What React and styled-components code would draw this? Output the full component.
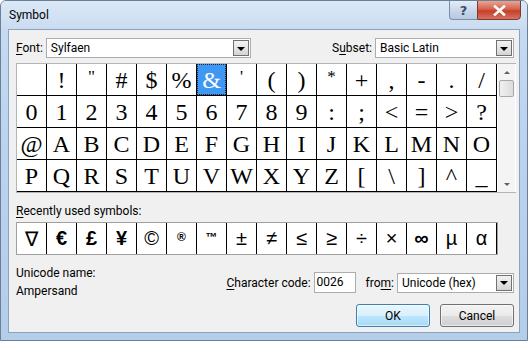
import styled, { createGlobalStyle } from "styled-components";

const GlobalStyle = createGlobalStyle`
  html, body { margin: 0; padding: 0; background: #fff; }
  body { font-family: Roboto, "Noto Sans", sans-serif; }
  * { box-sizing: border-box; }
`;

const ROWS = [
  [" ", "!", '"', "#", "$", "%", "&", "'", "(", ")", "*", "+", ",", "-", ".", "/"],
  ["0", "1", "2", "3", "4", "5", "6", "7", "8", "9", ":", ";", "<", "=", ">", "?"],
  ["@", "A", "B", "C", "D", "E", "F", "G", "H", "I", "J", "K", "L", "M", "N", "O"],
  ["P", "Q", "R", "S", "T", "U", "V", "W", "X", "Y", "Z", "[", "\\", "]", "^", "_"],
];

const RECENT = ["∇", "€", "£", "¥", "©", "®", "™", "±", "≠", "≤", "≥", "÷", "×", "∞", "µ", "α"];

// small chars that sit high in the cell, like in Sylfaen
const SMALL = { "*": true, "'": true, '"': true };
// recent symbols drawn heavier in the reference
const HEAVY = { "€": true, "£": true, "¥": true, "∞": true };

const SymbolDialog = () => {
  return (
    <>
      <GlobalStyle />
      <Window>
        <TitleBar>
          <Title>Symbol</Title>
          <Caption>
            <HelpBtn>?</HelpBtn>
            <CloseBtn>
              <svg width="13" height="11" viewBox="0 0 13 11">
                <path d="M2 1.5 L11 9.5 M11 1.5 L2 9.5" stroke="#fff" strokeWidth="2.6" strokeLinecap="square" />
              </svg>
            </CloseBtn>
          </Caption>
        </TitleBar>

        <Client>
          <TopRow>
            <Field>
              <Label><u>F</u>ont:</Label>
              <Combo $w={205}>
                <ComboText>Sylfaen</ComboText>
                <DropBtn><Arrow /></DropBtn>
              </Combo>
            </Field>
            <Field>
              <Label>S<u>u</u>bset:</Label>
              <Combo $w={139}>
                <ComboText>Basic Latin</ComboText>
                <DropBtn><Arrow /></DropBtn>
              </Combo>
            </Field>
          </TopRow>

          <GridBox>
            <Grid>
              {ROWS.flat().map((ch, i) => (
                <Cell key={i} $selected={ch === "&"} $small={SMALL[ch]}>
                  {ch}
                </Cell>
              ))}
            </Grid>
            <ScrollBar>
              <ScrollArrow $up />
              <Thumb />
              <Track />
              <ScrollArrow />
            </ScrollBar>
          </GridBox>

          <SectionLabel><u>R</u>ecently used symbols:</SectionLabel>
          <RecentRow>
            {RECENT.map((ch, i) => (
              <RecentCell key={i} $tiny={ch === "®" || ch === "™"} $heavy={HEAVY[ch]}>
                {ch}
              </RecentCell>
            ))}
          </RecentRow>

          <Bottom>
            <NameBlock>
              <Text>Unicode name:</Text>
              <Text>Ampersand</Text>
            </NameBlock>
            <RightBlock>
              <CodeRow>
                <Label><u>C</u>haracter code:</Label>
                <Input>0026</Input>
                <Label $ml={10}>fro<u>m</u>:</Label>
                <Combo $w={117}>
                  <ComboText>Unicode (hex)</ComboText>
                  <DropBtn><Arrow /></DropBtn>
                </Combo>
              </CodeRow>
              <Buttons>
                <Button $default>OK</Button>
                <Button>Cancel</Button>
              </Buttons>
            </RightBlock>
          </Bottom>
        </Client>
      </Window>
    </>
  );
};

export default SymbolDialog;

const Window = styled.div`
  width: 528px;
  height: 341px;
  display: flex;
  flex-direction: column;
  background: linear-gradient(180deg, #c9dcf2 0%, #bcd3ee 40%, #b4cde9 100%);
  border: 1px solid #6b7f99;
  border-radius: 6px 6px 0 0;
  overflow: hidden;
`;

const TitleBar = styled.div`
  height: 28px;
  display: flex;
  align-items: flex-start;
  justify-content: space-between;
  padding-left: 8px;
  background: linear-gradient(180deg, #dbe8f6 0%, #cbdcf1 100%);
`;

const Title = styled.div`
  font-size: 12px;
  color: #000;
  margin-top: 7px;
`;

const Caption = styled.div`
  display: flex;
  margin-right: 6px;
  margin-top: -1px;
`;

const HelpBtn = styled.div`
  width: 28px;
  height: 20px;
  border: 1px solid #7a8ea8;
  border-right: none;
  border-radius: 0 0 0 4px;
  background: linear-gradient(180deg, #e4edf8 0%, #c9d8ea 50%, #b7c9df 100%);
  color: #3c4d66;
  font-family: "DejaVu Sans", sans-serif;
  font-size: 13px;
  font-weight: bold;
  display: flex;
  align-items: center;
  justify-content: center;
`;

const CloseBtn = styled.div`
  width: 44px;
  height: 20px;
  border: 1px solid #7a3a30;
  border-radius: 0 0 4px 0;
  background: linear-gradient(180deg, #e8a493 0%, #d7634d 45%, #c4402b 55%, #d7735f 100%);
  display: flex;
  align-items: center;
  justify-content: center;
`;

const Client = styled.div`
  flex: 1;
  margin: 0 7px 7px 7px;
  background: #f0f0f0;
  border: 1px solid #8aa3c2;
  padding: 8px 5px 0 7px;
  display: flex;
  flex-direction: column;
`;

const TopRow = styled.div`
  display: flex;
  justify-content: space-between;
  align-items: center;
  height: 20px;
`;

const Field = styled.div`
  display: flex;
  align-items: center;
`;

const Label = styled.span`
  font-size: 12px;
  color: #000;
  margin-right: 3px;
  margin-left: ${({ $ml }) => ($ml ? `${$ml}px` : "0")};
  white-space: nowrap;
  u { text-decoration-thickness: 1px; text-underline-offset: 2px; }
`;

const Combo = styled.div`
  width: ${({ $w }) => $w}px;
  height: 20px;
  background: #fff;
  border: 1px solid #abadb3;
  display: flex;
  align-items: center;
  justify-content: space-between;
  padding: 0 1px 0 4px;
`;

const ComboText = styled.span`
  font-size: 12px;
  color: #000;
`;

const DropBtn = styled.div`
  width: 16px;
  height: 16px;
  border: 1px solid #707070;
  background: linear-gradient(180deg, #f2f2f2 0%, #e4e4e4 50%, #d4d4d4 100%);
  display: flex;
  align-items: center;
  justify-content: center;
`;

const Arrow = styled.div`
  width: 0;
  height: 0;
  border-left: 4px solid transparent;
  border-right: 4px solid transparent;
  border-top: 4px solid #000;
  margin-top: 1px;
`;

const GridBox = styled.div`
  margin-top: 5px;
  display: flex;
  background: #fff;
  border: 1px solid #b5b5b5;
  border-right: none;
  width: 500px;
`;

const Grid = styled.div`
  display: grid;
  grid-template-columns: repeat(16, 29px);
  grid-template-rows: repeat(4, 31px);
  gap: 1px;
  background: #000;
  border: 1px solid #000;
  border-left: none;
  border-top: none;
`;

const Cell = styled.div`
  background: ${({ $selected }) => ($selected ? "#3e97f2" : "#fff")};
  color: ${({ $selected }) => ($selected ? "#fff" : "#000")};
  outline: ${({ $selected }) => ($selected ? "1px dotted #222" : "none")};
  outline-offset: -1px;
  font-family: "Liberation Serif", "DejaVu Serif", serif;
  font-size: ${({ $small }) => ($small ? "17px" : "24px")};
  display: flex;
  align-items: ${({ $small }) => ($small ? "flex-start" : "center")};
  padding-top: ${({ $small }) => ($small ? "4px" : "0")};
  justify-content: center;
  line-height: 1;
`;

const ScrollBar = styled.div`
  width: 17px;
  margin-left: 1px;
  display: flex;
  flex-direction: column;
  align-items: center;
  background: #f4f4f4;
`;

const ScrollArrow = styled.div`
  height: 16px;
  width: 17px;
  display: flex;
  align-items: center;
  justify-content: center;
  &::before {
    content: "";
    width: 0;
    height: 0;
    border-left: 3px solid transparent;
    border-right: 3px solid transparent;
    ${({ $up }) =>
      $up ? "border-bottom: 3px solid #606060;" : "border-top: 3px solid #606060;"}
  }
`;

const Thumb = styled.div`
  width: 15px;
  height: 17px;
  border: 1px solid #a8a8a8;
  border-radius: 2px;
  background: linear-gradient(90deg, #f0f0f0 0%, #dcdcdc 100%);
`;

const Track = styled.div`
  flex: 1;
`;

const SectionLabel = styled.div`
  font-size: 12px;
  margin-top: 11px;
  height: 16px;
  color: #000;
  u { text-underline-offset: 2px; }
`;

const RecentRow = styled.div`
  margin-top: 2px;
  display: grid;
  grid-template-columns: repeat(16, 29px);
  grid-template-rows: 31px;
  gap: 1px;
  background: #000;
  border: 1px solid #a0a0a0;
  width: 482px;
`;

const RecentCell = styled.div`
  background: #fff;
  font-family: "Liberation Sans", Arial, sans-serif;
  font-size: ${({ $tiny }) => ($tiny ? "12px" : "20px")};
  font-weight: ${({ $tiny, $heavy }) => ($tiny || $heavy ? "bold" : "normal")};
  display: flex;
  justify-content: center;
  align-items: ${({ $tiny }) => ($tiny ? "flex-start" : "center")};
  padding-top: ${({ $tiny }) => ($tiny ? "7px" : "0")};
  color: #000;
`;

const Bottom = styled.div`
  margin-top: 10px;
  display: flex;
  justify-content: space-between;
`;

const NameBlock = styled.div`
  display: flex;
  flex-direction: column;
  gap: 1px;
`;

const Text = styled.div`
  font-size: 12px;
  color: #000;
  line-height: 17px;
`;

const RightBlock = styled.div`
  display: flex;
  flex-direction: column;
  align-items: flex-end;
  padding-top: 7px;
`;

const CodeRow = styled.div`
  display: flex;
  align-items: center;
`;

const Input = styled.div`
  width: 42px;
  height: 21px;
  background: #fff;
  border: 1px solid #abadb3;
  font-size: 12px;
  padding: 2px 2px;
`;

const Buttons = styled.div`
  display: flex;
  gap: 10px;
  margin-top: 11px;
`;

const Button = styled.div`
  width: 74px;
  height: 23px;
  border: 1px solid ${({ $default }) => ($default ? "#3c7fb1" : "#707070")};
  border-radius: 3px;
  background: ${({ $default }) =>
    $default
      ? "linear-gradient(180deg, #eaf6fd 0%, #d9f0fc 50%, #bee6fd 51%, #a7d9f5 100%)"
      : "linear-gradient(180deg, #f2f2f2 0%, #ebebeb 50%, #dddddd 51%, #cfcfcf 100%)"};
  box-shadow: inset 0 0 0 1px rgba(255, 255, 255, 0.6);
  font-size: 12px;
  display: flex;
  align-items: center;
  justify-content: center;
  color: #000;
`;
